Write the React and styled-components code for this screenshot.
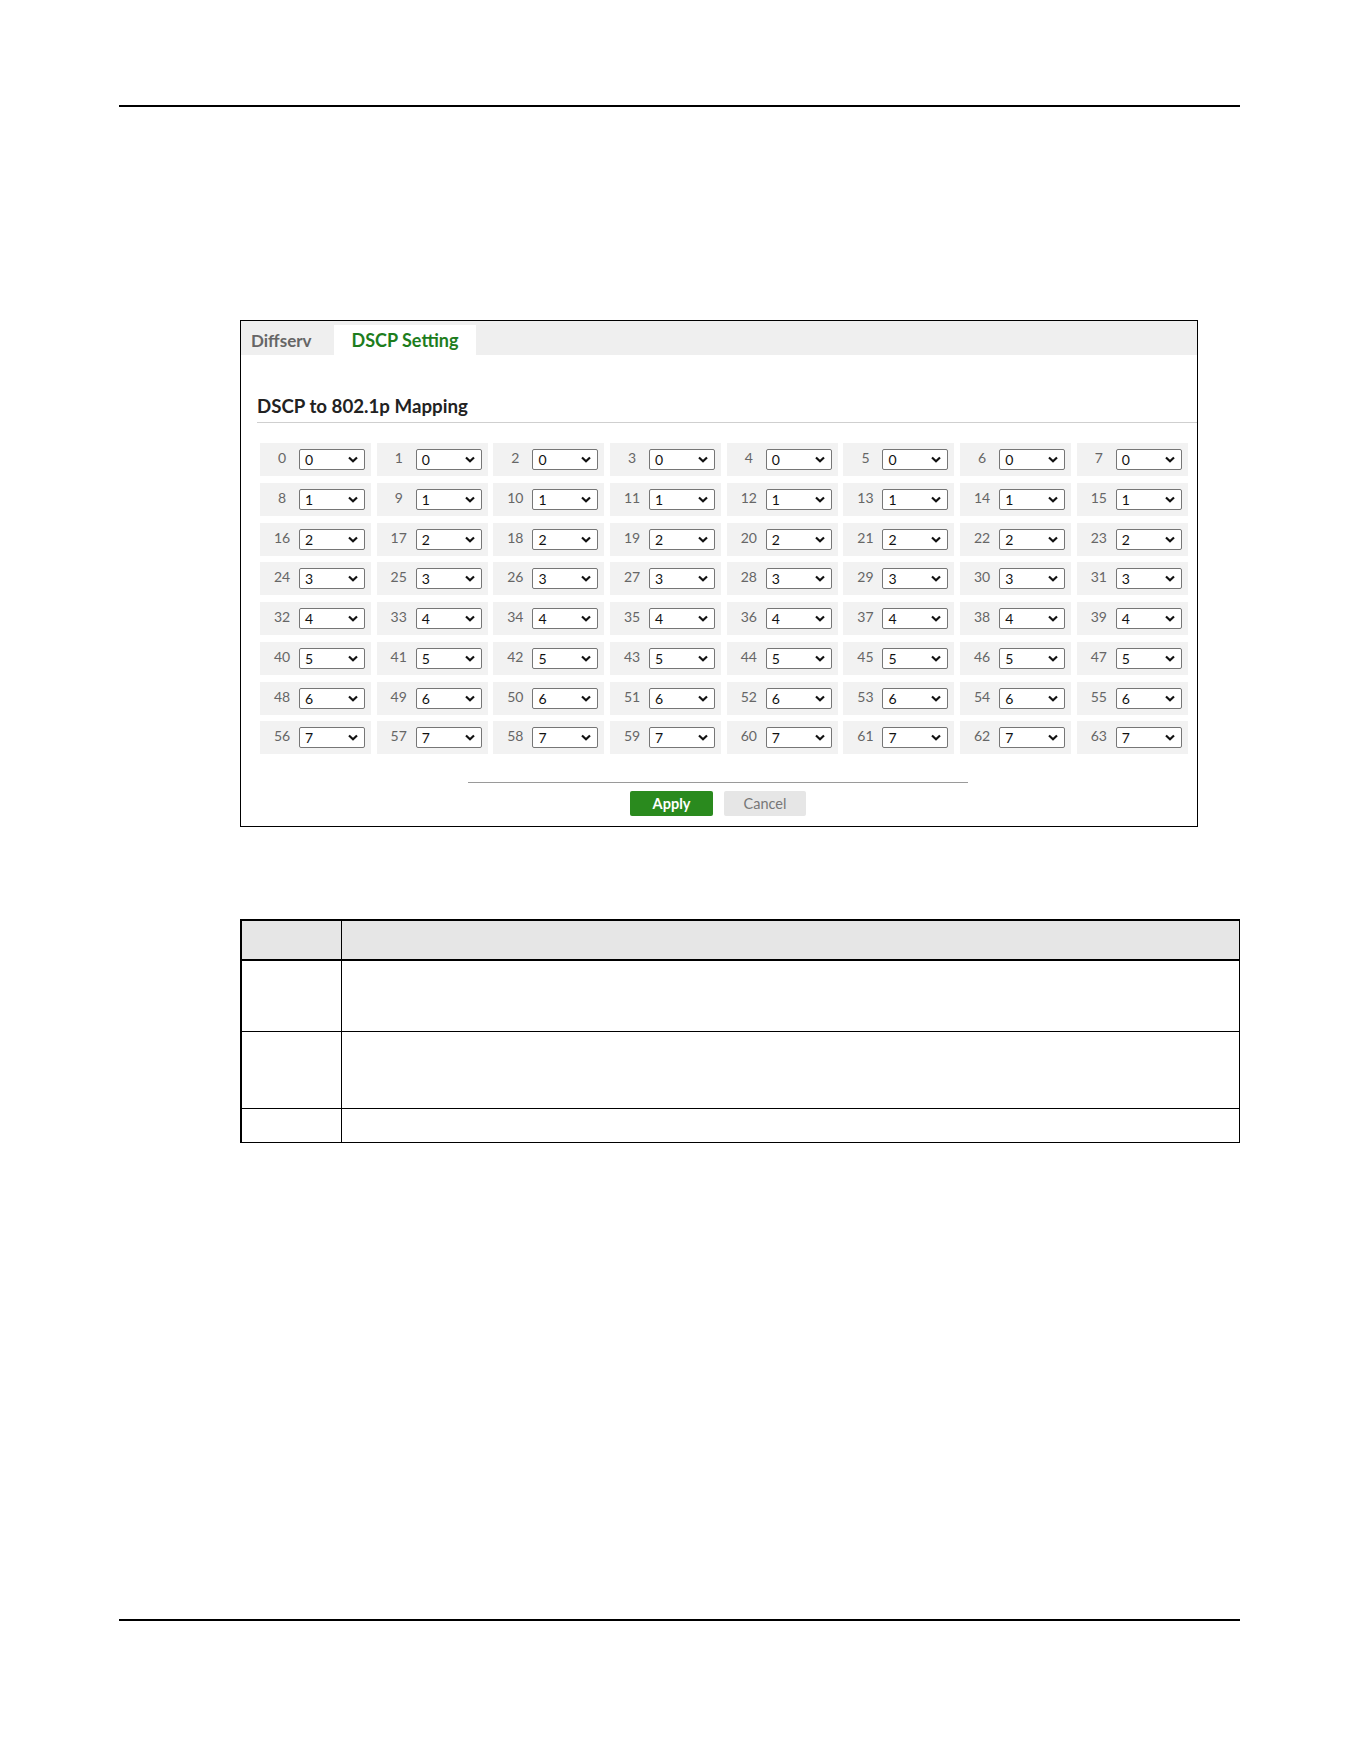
import React from "react";
import styled, { createGlobalStyle } from "styled-components";

const Global = createGlobalStyle`
  html, body { margin: 0; padding: 0; background: #fff; }
  body { font-family: "Lato", "Liberation Sans", sans-serif; }
  * { box-sizing: border-box; }
`;

const Page = styled.div`
  width: 1361px;
  min-height: 1761px;
  display: flex;
  flex-direction: column;
  padding-top: 105px;
`;

const Rule = styled.div`
  margin-left: 119px;
  width: 1121px;
  height: 2px;
  background: #000;
`;

const Panel = styled.section`
  margin: 213px 0 0 240px;
  width: 958px;
  height: 507px;
  border: 1px solid #000;
  display: flex;
  flex-direction: column;
`;

const TabBar = styled.div`
  height: 34px;
  background: #efefef;
  display: flex;
  align-items: flex-end;
  padding-left: 10px;
`;

const Tab = styled.div`
  height: 30px;
  display: flex;
  align-items: center;
  width: ${(p) => (p.$active ? "142px" : "83px")};
  justify-content: ${(p) => (p.$active ? "center" : "flex-start")};
  background: ${(p) => (p.$active ? "#fff" : "transparent")};
  color: ${(p) => (p.$active ? "#1d7d1d" : "#666")};
  font-weight: 700;
  font-size: ${(p) => (p.$active ? "18px" : "17px")};
`;

const Heading = styled.h2`
  margin: 41px 0 0 16px;
  padding-bottom: 5px;
  border-bottom: 1px solid #cfcfcf;
  font-size: 18.7px;
  font-weight: 700;
  color: #222;
  line-height: 21px;
`;

const Grid = styled.div`
  margin: 20px 0 0 19px;
  display: grid;
  grid-template-columns: repeat(8, 111px);
  grid-auto-rows: 33px;
  column-gap: 5.7px;
  row-gap: 6.75px;
`;

const Cell = styled.div`
  background: #f2f2f2;
  display: flex;
  align-items: center;
  padding-left: 5px;
`;

const Code = styled.span`
  width: 34px;
  text-align: center;
  font-size: 14px;
  color: #666;
  position: relative;
  top: -2px;
`;

const Picker = styled.div`
  width: 66px;
  height: 21px;
  border: 1px solid #767676;
  border-radius: 2px;
  background: #fff;
  display: flex;
  align-items: center;
  justify-content: space-between;
  padding: 0 6px 0 5px;
  font-size: 14px;
  color: #111;
`;

const Footer = styled.div`
  margin: 28px 0 0 227px;
  width: 500px;
  border-top: 1px solid #9a9a9a;
  padding-top: 8px;
  display: flex;
  justify-content: center;
  gap: 11px;
`;

const Button = styled.button`
  width: ${(p) => (p.$primary ? "83px" : "82px")};
  height: 25px;
  border: none;
  border-radius: 2px;
  font-family: inherit;
  font-size: 14.5px;
  font-weight: ${(p) => (p.$primary ? 700 : 400)};
  background: ${(p) => (p.$primary ? "#2a8a1e" : "#e6e6e6")};
  color: ${(p) => (p.$primary ? "#fff" : "#777")};
  padding: 0;
`;

const Table = styled.table`
  margin: 92px 0 0 240px;
  width: 1000px;
  border-collapse: collapse;
  border-top: 2px solid #000;
  border-left: 2px solid #000;
`;

const Th = styled.th`
  height: 40px;
  background: #e6e6e6;
  border-right: 1.5px solid #000;
  border-bottom: 2.5px solid #000;
  width: ${(p) => p.$w || "auto"};
  padding: 0;
`;

const Td = styled.td`
  height: ${(p) => p.$h}px;
  border-right: 1.5px solid #000;
  border-bottom: 1.5px solid #000;
  padding: 0;
`;

const Spacer = styled.div`
  flex: 1;
`;

const BottomRule = styled(Rule)`
  margin-bottom: 140px;
`;

function Chevron() {
  return (
    <svg width="10" height="7" viewBox="0 0 10 7">
      <path d="M1 1.5 L5 5.2 L9 1.5" fill="none" stroke="#111" strokeWidth="2.2" />
    </svg>
  );
}

const codes = Array.from({ length: 64 }, (_, i) => i);

export default function App() {
  return (
    <Page>
      <Global />
      <Rule />
      <Panel>
        <TabBar>
          <Tab>Diffserv</Tab>
          <Tab $active>DSCP Setting</Tab>
        </TabBar>
        <Heading>DSCP to 802.1p Mapping</Heading>
        <Grid>
          {codes.map((c) => (
            <Cell key={c}>
              <Code>{c}</Code>
              <Picker>
                <span>{Math.floor(c / 8)}</span>
                <Chevron />
              </Picker>
            </Cell>
          ))}
        </Grid>
        <Footer>
          <Button $primary>Apply</Button>
          <Button>Cancel</Button>
        </Footer>
      </Panel>
      <Table>
        <thead>
          <tr>
            <Th $w="100px" />
            <Th />
          </tr>
        </thead>
        <tbody>
          <tr>
            <Td $h={71} />
            <Td $h={71} />
          </tr>
          <tr>
            <Td $h={77} />
            <Td $h={77} />
          </tr>
          <tr>
            <Td $h={34} />
            <Td $h={34} />
          </tr>
        </tbody>
      </Table>
      <Spacer />
      <BottomRule />
    </Page>
  );
}
